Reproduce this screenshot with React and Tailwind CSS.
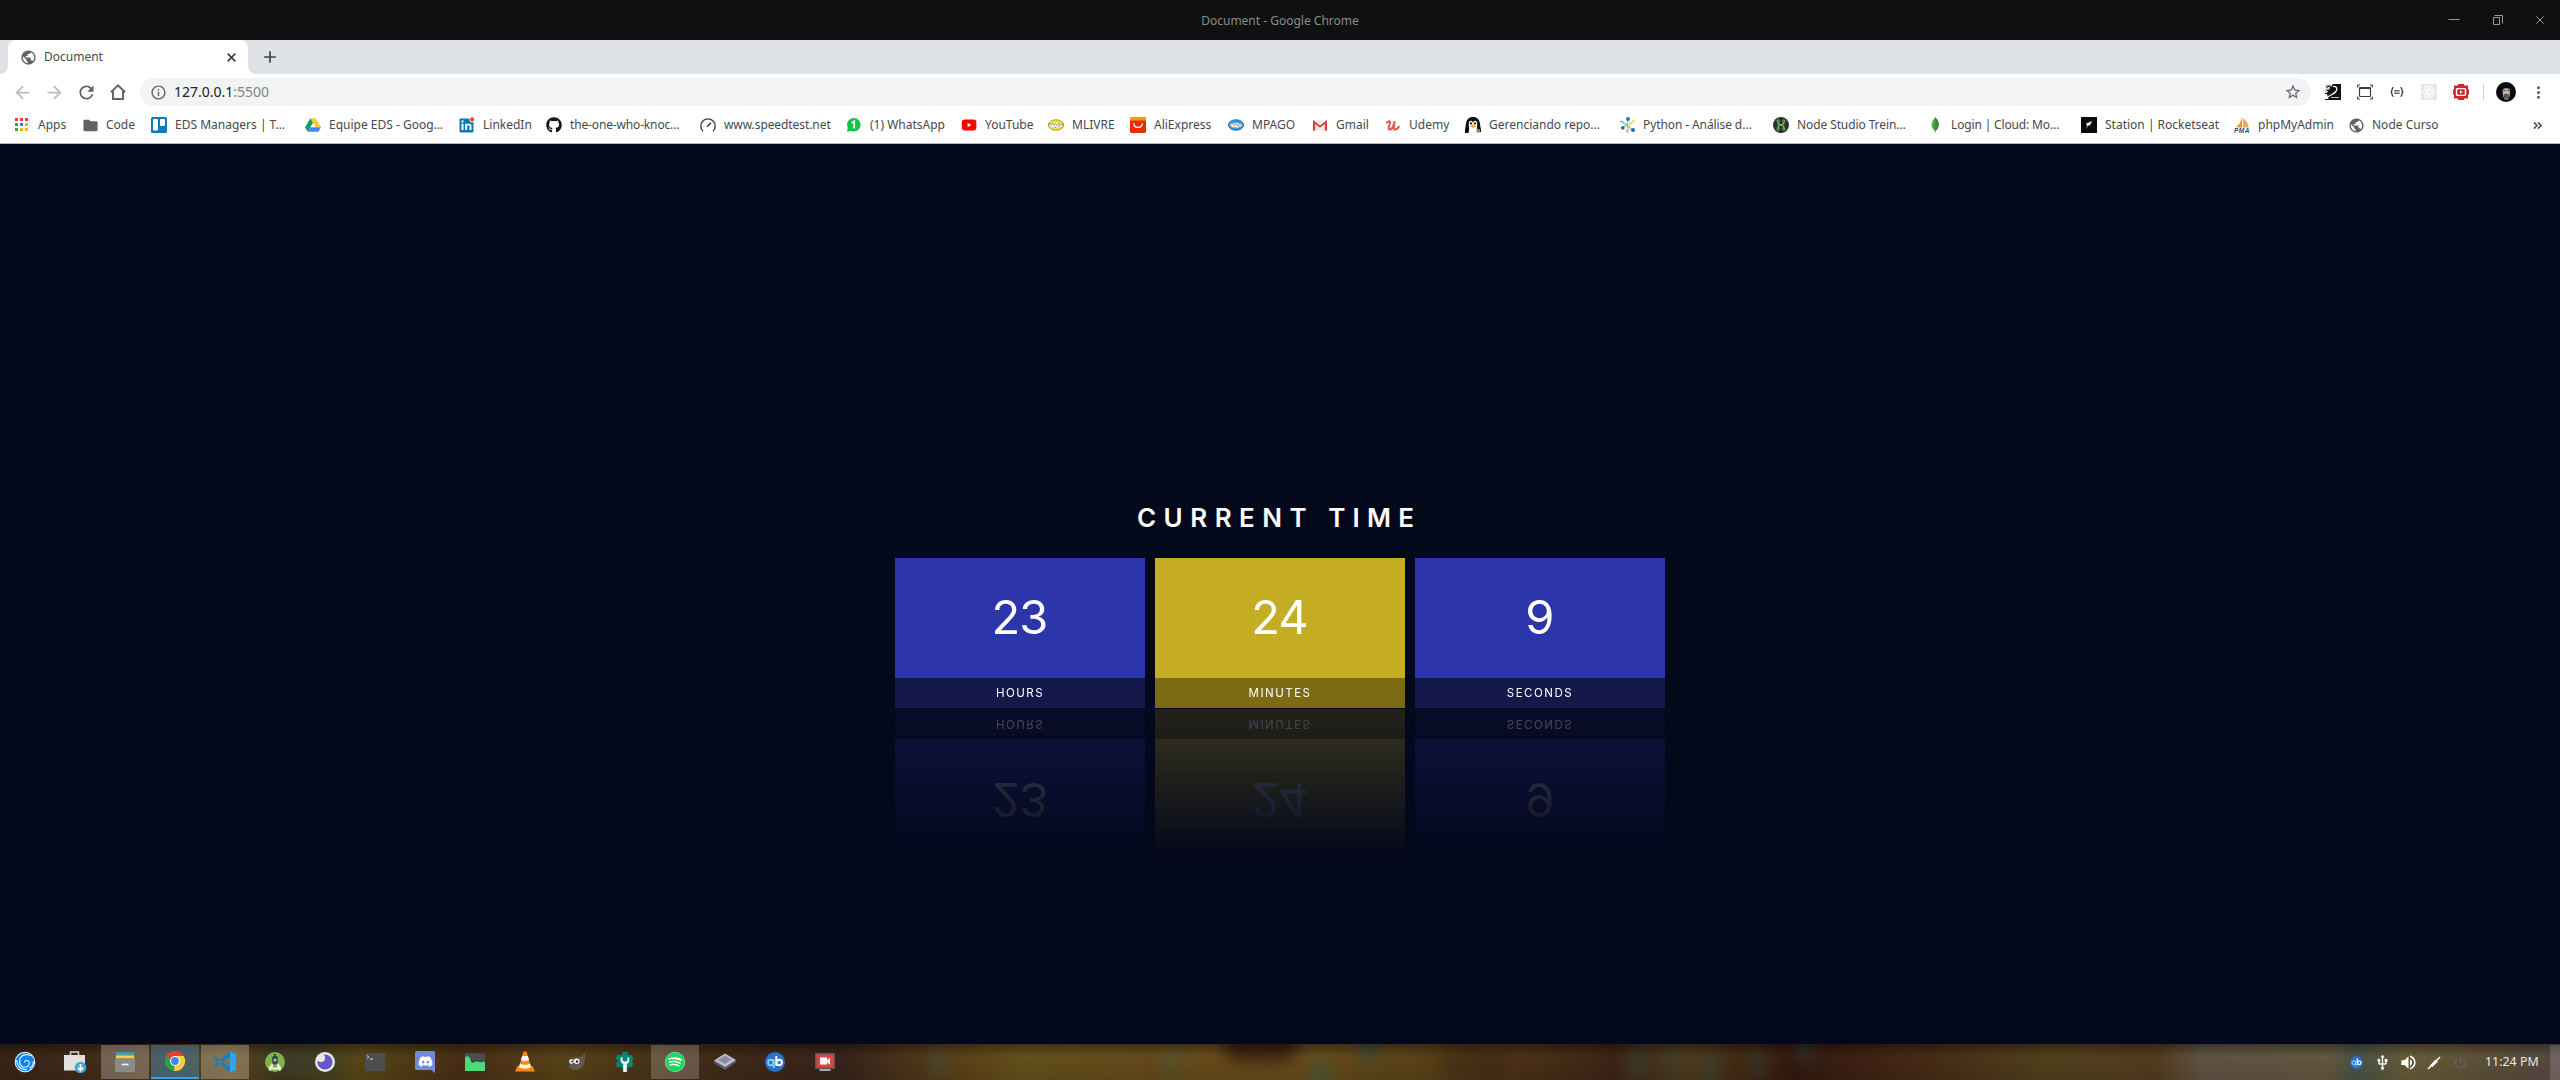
import React from "react";
import {
  MdAdd, MdArrowBack, MdArrowForward, MdFolder, MdInfoOutline, MdMoreVert,
  MdPowerSettingsNew, MdPublic, MdRefresh, MdStarBorder, MdUsb, MdVolumeUp,
} from "react-icons/md";
import { FaDiscord, FaGithub, FaSpotify } from "react-icons/fa";

const S = ({ n = 16, vb = "0 0 16 16", className = "", children }) => (
  <svg width={n} height={n} viewBox={vb} className={`block shrink-0 ${className}`} fill="none">
    {children}
  </svg>
);

/* ---------- bookmark icons ---------- */

const Apps = () => (
  <S>
    {[["#ea4335", "#ea4335", "#ea4335"], ["#34a853", "#1e88e5", "#fbb300"], ["#34a853", "#fbb300", "#fbb300"]].map((r, y) =>
      r.map((c, x) => <rect key={`${x}${y}`} x={1 + x * 5} y={1 + y * 5} width="3" height="3" fill={c} />)
    )}
  </S>
);
const Trello = () => (
  <S>
    <rect width="16" height="16" rx="1.5" fill="#0c7bc0" />
    <rect x="2" y="2" width="5" height="11.5" rx="1" fill="#fff" />
    <rect x="9" y="2" width="5" height="7" rx="1" fill="#fff" />
  </S>
);
const Drive = () => (
  <S>
    <path d="M5.4 1.3h5.2L16 10.3h-5.3z" fill="#fcc934" />
    <path d="M5.4 1.3 8 5.7 2.7 14.7 0 10.3z" fill="#11a15f" />
    <path d="M5.3 10.3H16l-2.7 4.4H2.7z" fill="#4285f4" />
  </S>
);
const LinkedIn = () => (
  <S>
    <rect x=".5" y="1.5" width="14" height="14" rx="1" fill="#0a78b5" />
    <path d="M2.5 6.700h2V13h-2zM2.500 3.500h2v2h-2zM6.100 6.700h2v.9c.9-1.5 4.400-1.500 4.400 1.600V13h-2V9.600c0-1.700-2.300-1.600-2.300 0V13H6.100z" fill="#fff" />
    <circle cx="13.2" cy="2.4" r="2.8" fill="#fff" />
    <circle cx="13.2" cy="2.4" r="2.1" fill="#f0433a" />
  </S>
);
const Speed = () => (
  <S>
    <path d="M3 14.3A7.2 7.2 0 1 1 13 14.3" stroke="#3c4043" strokeWidth="1.4" />
    <path d="M7 9.8 11 5.8" stroke="#3c4043" strokeWidth="1.6" />
  </S>
);
const Whats = () => (
  <S>
    <circle cx="7.8" cy="7.800" r="6.800" fill="#12c344" />
    <path d="M1 14.800 1.800 10.500l3.700 3.300z" fill="#12c344" />
    <path d="M5.800 6 8.200 4.400v7.200" stroke="#fff" strokeWidth="1.800" />
  </S>
);
const YT = () => (
  <S>
    <rect x=".8" y="2.600" width="14.600" height="10.800" rx="2.800" fill="#f00" />
    <path d="M6.600 5.800v4.400L10.400 8z" fill="#fff" />
  </S>
);
const Shake = ({ c, d }) => (
  <S>
    <ellipse cx="8" cy="8" rx="7.600" ry="5.300" fill={c} stroke={d} strokeWidth=".8" />
    <path d="M1.500 7.300C3.500 6.300 5 5.500 6.500 5.900 9 5.200 12 6.300 14.500 7.300c-.5 2.200-3 3.200-6 3.700C5 10.800 2.500 9.800 1.500 7.300z" fill="#f4f4f0" />
    <path d="M.8 6.800c2.200.8 3.700-.3 5.200 0M5.500 8.300 7.500 7l4 2.700M6.500 10l2 .8M15.200 6.800c-1.800 1-3.700.6-5.200-.1" stroke="#77817f" strokeWidth=".9" />
  </S>
);
const Ali = () => (
  <S>
    <rect width="16" height="16" rx="1.800" fill="#e62e04" />
    <path d="M0 1.800A1.800 1.800 0 0 1 1.800 0h12.400A1.800 1.800 0 0 1 16 1.800V3.500H0z" fill="#ff9b00" />
    <path d="M3.700 6.200c.4 5.600 8.200 5.600 8.600 0" stroke="#fff" strokeWidth="1.400" />
  </S>
);
const Gmail = () => (
  <S>
    <path d="M1.500 3h13v10.500h-13z" fill="#ececec" />
    <path d="M1 13.700V3l7 5.400L15 3v10.700h-2.200V7L8 10.700 3.200 7v6.700z" fill="#d9453a" />
  </S>
);
const Udemy = () => (
  <S>
    <path d="M2 5.500C4 3.500 5.700 4 4.800 6.800 3.600 10.300 3 12.800 5 12.600c2-.2 4-4.500 4.700-8.300-.9 4-1.500 8.300.2 8.300 1.200 0 2.700-1 3.900-2.700" stroke="#ec5252" strokeWidth="2" strokeLinecap="round" />
  </S>
);
const Penguin = () => (
  <S>
    <path d="M0 16C-.5 13 .8 10 1 7 1.300 2.500 4 0 8 0s6.500 2.500 7 7c.2 3 1.200 5 1 8h-3l-1.500-4h-7L3.500 16z" fill="#0b0b0b" />
    <path d="M4.800 14C3.500 9 3 4 5.700 3.700 7 3.500 8 5 8 6c0-1 1-2.500 2.300-2.300C13 4 12.500 9 11.300 14z" fill="#fff" />
    <circle cx="6" cy="6.400" r="1.100" fill="#111" /><circle cx="10" cy="6.400" r="1.100" fill="#111" />
    <path d="M4.700 9 8 7.500 11.300 9 8 11z" fill="#f5b400" />
    <circle cx="13.200" cy="13.800" r="2" fill="#74a35c" />
  </S>
);
const Python = () => (
  <S>
    <path d="M9 2 8 8l6-3M1 4l7 4-6 3M8 8l1 6M8 8l5 5" stroke="#87b9cf" strokeWidth="1.200" />
    <circle cx="9" cy="2" r="1.900" fill="#1c6fb8" /><circle cx="3.800" cy="10.800" r="1.900" fill="#1c6fb8" />
    <circle cx="14" cy="13" r="2" fill="#1c6fb8" /><circle cx="14.500" cy="3.800" r="1.300" fill="#f6ea37" />
    <circle cx="10.500" cy="7.500" r="1.800" fill="#f6ea37" /><circle cx="8.500" cy="14" r="1.800" fill="#f7b593" />
    <path d="M0 4.300 4 3.700 5 6z" fill="#8ccb65" />
  </S>
);
const NodeStudio = () => (
  <S>
    <circle cx="8" cy="8" r="8" fill="#28323c" />
    <path d="M5.300 4.500v2.300L8 8l2.700-1.200V4.500M5.300 11.500V9.200L8 8l2.700 1.200v2.300" stroke="#7cc04b" strokeWidth="1.400" />
    <g stroke="#7cc04b" strokeWidth="1" fill="#28323c">
      <circle cx="5.200" cy="4" r="1.200" /><circle cx="10.800" cy="4" r="1.200" />
      <circle cx="5.200" cy="12" r="1.200" /><circle cx="10.800" cy="12" r="1.200" />
    </g>
  </S>
);
const Mongo = () => (
  <S>
    <path d="M8.200.300C11 3 12 5.500 11.700 8.500c-.2 2.500-1.500 4-3 5.200l-.2 2h-.6l-.2-2C6 12.300 4.700 10.500 4.600 8 4.500 5 6.500 2.500 8.200.300z" fill="#4faa41" />
    <path d="M8.200.300C11 3 12 5.500 11.700 8.500c-.2 2.500-1.500 4-3 5.200l-.500.300z" fill="#3a8a3a" />
  </S>
);
const Rocket = () => (
  <S>
    <rect width="16" height="16" fill="#0a0a0c" />
    <path d="M5 6.500 11.500 4 10 6.200l-1 2.300H7L5.500 12l.5-3.500z" fill="#f2f2f2" />
  </S>
);
const PMA = () => (
  <S>
    <path d="M8 0v10.500H2.800C4.500 8 7 5 8 0z" fill="#f0921e" />
    <path d="M9 1c3 2.500 5.500 5.500 5.800 9.500H9z" fill="#f8a94a" />
    <path d="M5 3.500c-.5 2.500-2 5-4 7h1.300C4 8.500 5 6 5 3.500z" fill="#d9d2c8" />
    <text x="0" y="16" fontSize="6.500" fontWeight="700" fontStyle="italic" fontFamily="Liberation Sans" fill="#3a3f78" textLength="15.500">PMA</text>
  </S>
);

const Grey = ({ children }) => <span className="text-[17px] text-[#5f6368]">{children}</span>;

const bookmarks = [
  [<Apps />, "Apps", "w-[68px]"],
  [<Grey><MdFolder /></Grey>, "Code", "w-[69px]"],
  [<Trello />, "EDS Managers | T…", "w-[154px]"],
  [<Drive />, "Equipe EDS - Goog…", "w-[154px]"],
  [<LinkedIn />, "LinkedIn", "w-[87px]"],
  [<FaGithub size={16} color="#181616" />, "the-one-who-knoc…", "w-[154px] tracking-[-0.15px]"],
  [<Speed />, "www.speedtest.net", "w-[146px] tracking-[-0.080px]"],
  [<Whats />, "(1) WhatsApp", "w-[115px]"],
  [<YT />, "YouTube", "w-[87px]"],
  [<Shake c="#f3e32c" d="#8a8746" />, "MLIVRE", "w-[82px]"],
  [<Ali />, "AliExpress", "w-[98px]"],
  [<Shake c="#2d9be0" d="#23618f" />, "MPAGO", "w-[84px]"],
  [<Gmail />, "Gmail", "w-[73px]"],
  [<Udemy />, "Udemy", "w-[80px]"],
  [<Penguin />, "Gerenciando repo…", "w-[154px]"],
  [<Python />, "Python - Análise d…", "w-[154px] tracking-[-0.1px]"],
  [<NodeStudio />, "Node Studio Trein…", "w-[154px] tracking-[-0.1px]"],
  [<Mongo />, "Login | Cloud: Mo…", "w-[154px] tracking-[-0.15px]"],
  [<Rocket />, "Station | Rocketseat", "w-[153px]"],
  [<PMA />, "phpMyAdmin", "w-[114px]"],
  [<Grey><MdPublic /></Grey>, "Node Curso", "w-[100px]"],
];

/* ---------- toolbar extension icons ---------- */

const ExtBird = () => (
  <S>
    <rect width="16" height="16" fill="#111" />
    <path d="M0 0h8L2 9H0z" fill="#ddd" />
    <path d="M1.500 3.500c2-2 4-1.500 4 .5S3 7 1.500 6" stroke="#222" strokeWidth="1.300" />
    <path d="M8 2.500c4-.5 5 2.500 2.500 5.500S5 10.500 3 13" stroke="#fff" strokeWidth="1.300" />
    <path d="M0 10h2l1.500 5H0zM6 13h8v.8H6z" fill="#fff" />
  </S>
);
const ExtFrame = () => (
  <S>
    <path d="M0 4V.500h3.500zM16 4V.500h-3.500zM0 12v3.500h3.500zM16 12v3.500h-3.500z" fill="#2f8a2c" />
    <rect x="2.500" y="3.500" width="11" height="9" rx=".8" stroke="#3b3b3b" strokeWidth="1.200" />
    <path d="M2.500 4h11" stroke="#3b3b3b" strokeWidth="2" />
  </S>
);
const ExtBraces = () => (
  <S>
    <path d="M4.500 3.500C2 3.500 4 7.500 1.800 8 4 8.500 2 12.500 4.500 12.500M11.500 3.500c2.500 0 .5 4 2.700 4.500-2.200.5-.2 4.500-2.700 4.500" stroke="#333" strokeWidth="1.300" />
    <path d="M5.500 6.800h5M5.500 9.200h5" stroke="#333" strokeWidth="1.500" strokeDasharray="1.400 .5" />
  </S>
);
const ExtReact = () => (
  <S>
    <rect width="16" height="16" fill="#e6e6e6" />
    <g stroke="#fff" strokeWidth="1">
      <ellipse cx="8" cy="8" rx="6.500" ry="2.600" />
      <ellipse cx="8" cy="8" rx="6.500" ry="2.600" transform="rotate(60 8 8)" />
      <ellipse cx="8" cy="8" rx="6.500" ry="2.600" transform="rotate(120 8 8)" />
    </g>
    <circle cx="8" cy="8" r="1.400" fill="#fff" />
  </S>
);
const ExtTube = () => (
  <S>
    <path d="M1 1.500h4V0h6v1.500h4v4h1v5h-1v4h-4V16H5v-1.500H1v-4H0v-5h1z" fill="#d4232b" />
    <rect x="2.800" y="4" width="10.400" height="8" rx="1.500" fill="#fff" />
    <rect x="4.200" y="5.300" width="7.600" height="5.400" rx="1" fill="#d4232b" />
    <path d="M7 6.300v3.400L9.700 8z" fill="#fff" />
  </S>
);
const Avatar = () => (
  <S n={20} vb="0 0 20 20">
    <circle cx="10" cy="10" r="10" fill="#070812" />
    <path d="M6.500 8c1-2.500 6.500-2.500 7.500 0l-.3 6-1.700 3.500H8.700L7 14z" fill="#c4b3a9" />
    <path d="M7 8.500h2.500M11 8.500h2.500M8 13c1.500-1 3-1 4.500 0l-.4 3H8.500z" stroke="#28201f" strokeWidth=".7" fill="#6d5c56" />
  </S>
);

const Chrome = () => (
  <>
    <header className="flex h-10 items-center bg-[#101010] text-[12px] text-[#8c8c8c]">
      <div className="w-[105px]" />
      <div className="flex-1 pl-[7px] pt-px text-center">Document - Google Chrome</div>
      <div className="flex w-[112px] items-center justify-between pr-4 text-[#9a9a9a]">
        <S n={12} vb="0 0 12 12"><path d="M.500 5.500h11" stroke="currentColor" /></S>
        <S n={10} vb="0 0 10 10"><path d="M.500 2.500h6v7h-6zM1.500.500h8v8" stroke="currentColor" /></S>
        <S n={8} vb="0 0 8 8"><path d="m.300.300 7.400 7.400M7.700.300.300 7.700" stroke="currentColor" /></S>
      </div>
    </header>
    <div className="flex h-[34px] bg-[#dee1e6]">
      <div className="w-2 bg-white"><div className="h-full rounded-br-lg bg-[#dee1e6]" /></div>
      <div className="flex w-60 items-center rounded-t-lg bg-white pr-3 pl-3 text-[12px] text-[#45494d]">
        <MdPublic size={17} color="#5f6368" />
        <span className="ml-[7px] flex-1">Document</span>
        <S n={9} vb="0 0 9 9"><path d="m.700.700 7.600 7.600M8.300.700.700 8.300" stroke="#3c4043" strokeWidth="1.700" /></S>
      </div>
      <div className="w-2 bg-white"><div className="h-full rounded-bl-lg bg-[#dee1e6]" /></div>
      <div className="flex items-center pl-1"><MdAdd size={20} color="#3c4043" /></div>
    </div>
    <div className="flex h-9 items-center bg-white px-1.5 text-[#5f6368]">
      <div className="flex w-8 justify-center text-[#babcbe]"><MdArrowBack size={21} /></div>
      <div className="flex w-8 justify-center text-[#babcbe]"><MdArrowForward size={21} /></div>
      <div className="flex w-8 justify-center"><MdRefresh size={21} /></div>
      <div className="flex w-8 justify-center">
        <S><path d="M.9 8.300 8 1.400l7.100 6.900M3 7v8h10V7" stroke="currentColor" strokeWidth="1.900" /></S>
      </div>
      <div className="ml-1.5 flex h-7 flex-1 items-center rounded-full bg-[#f1f3f4] pr-[9px] pl-2.5 text-[14px]">
        <MdInfoOutline size={17} />
        <span className="ml-[7px] -mt-px text-[#202124]">127.0.0.1<span className="text-[#80868b]">:5500</span></span>
        <span className="flex-1" />
        <MdStarBorder size={18} />
      </div>
      <div className="ml-1.5 flex">
        {[ExtBird, ExtFrame, ExtBraces, ExtReact, ExtTube].map((E, i) => (
          <div key={i} className="flex w-8 justify-center"><E /></div>
        ))}
      </div>
      <div className="mr-1.5 ml-1.5 h-4 w-px bg-[#c9cbce]" />
      <div className="flex w-8 justify-center"><Avatar /></div>
      <div className="flex w-8 justify-center"><MdMoreVert size={19} /></div>
    </div>
    <nav className="flex h-[34px] items-center border-b border-[#b4b5b8] bg-white pr-[18px] pb-[3px] pl-3.5 text-[12px] text-[#45494d]">
      {bookmarks.map(([icon, label, w]) => (
        <div key={label} className={`flex shrink-0 items-center ${w}`}>
          <span className="flex w-6 shrink-0">{icon}</span>
          <span className="whitespace-nowrap">{label}</span>
        </div>
      ))}
      <span className="ml-auto">
        <S n={9} vb="0 0 10 10"><path d="m1 1.500 3.500 3.500L1 8.500M5.500 1.500 9 5 5.500 8.500" stroke="#4b4f54" strokeWidth="1.700" /></S>
      </span>
    </nav>
  </>
);

/* ---------- clock ---------- */

const Cell = ({ value, label, face, base }) => (
  <div className="w-[250px] text-white">
    <div className={`flex h-[120px] items-center justify-center pr-px pb-[3px] text-[47px] leading-none tracking-[-0.8px] ${face}`}>{value}</div>
    <div className={`flex h-[30px] items-center justify-center pt-[2px] text-[11.5px] tracking-[1.5px] ${base}`}>{label}</div>
  </div>
);

const Clock = () => (
  <main className="flex h-[900px] flex-col items-center bg-[#04081b] pt-[359px] font-['Inter']">
    <h2 className="mb-[25px] pr-[2px] text-[26px] leading-[30px] font-semibold whitespace-nowrap text-white">
      <span className="tracking-[7.500px]">CURRENT</span>
      <span className="ml-[14px] tracking-[7.200px]">TIME</span>
    </h2>
    <div className="flex gap-2.5 [-webkit-box-reflect:below_1px_linear-gradient(transparent,#0004)]">
      <Cell value="23" label="HOURS" face="bg-[#2d35aa]" base="bg-[#14184b]" />
      <Cell value="24" label="MINUTES" face="bg-[#c4ad23]" base="bg-[#7a6b14]" />
      <Cell value="9" label="SECONDS" face="bg-[#2d35aa]" base="bg-[#14184b]" />
    </div>
  </main>
);

/* ---------- dock ---------- */

const D = ({ children }) => <S n={20} vb="0 0 20 20" className="overflow-visible">{children}</S>;
const QB = ({ n = 20 }) => (
  <S n={n} vb="0 0 20 20">
    <circle cx="10" cy="10" r="10" fill="#2d6fc4" />
    <circle cx="5.800" cy="10.500" r="2.700" stroke="#6fd0fb" strokeWidth="1.900" /><path d="M8.700 7v9" stroke="#6fd0fb" strokeWidth="1.900" />
    <circle cx="14.200" cy="10.500" r="2.700" stroke="#fff" strokeWidth="1.900" /><path d="M11.300 4v10" stroke="#fff" strokeWidth="1.900" />
  </S>
);

const dock = [
  <D><circle cx="10" cy="10" r="10.300" fill="#eaf6ff" /><circle cx="10" cy="10" r="9.300" fill="#0a84ee" /><path d="M17 4C10 .5 4.500 4 4.500 9.500c0 4.500 4.500 7 8 5 2.500-1.500 2.500-5 0-6-1.500-.5-3 .3-3 2M1.500 8C2 14 6 18 12 17.500M18.500 9c0 3.500-1.500 6-4 7.500" stroke="#e3f3ff" strokeWidth="1.200" /></D>,
  <D><path d="M5.500 3.500V0h8v3.500" stroke="#d9d5d2" strokeWidth="1.500" /><path d="M-1 3h21v15.500H-1z" fill="#e3e1df" /><circle cx="15.500" cy="15.500" r="5.800" fill="#3fa9dc" /><path d="M15.500 12v6M13 15.800l2.500 2.700 2.500-2.700" stroke="#fff" strokeWidth="1.800" /></D>,
  <D><path d="M1 0h18v2.500H1z" fill="#3e8ce0" /><path d="M1 2.500h18V4H1z" fill="#5fd368" /><path d="M1 4h18v2.500H1z" fill="#f6d04d" /><path d="M0 6.500h20V20H0z" fill="#8a8a8a" /><path d="M6.500 12.500h7" stroke="#f3f3f3" strokeWidth="1.700" /></D>,
  <D><path d="M10 10 1.300 5A10 10 0 0 1 18.700 5z" fill="#e34133" /><path d="M10 10 1.300 5A10 10 0 0 0 10 20l4.300-7.500z" fill="#2aa24c" /><path d="M10 10 9 20a10 10 0 0 0 9.700-15H10z" fill="#fccd3c" /><path d="M1.300 5 5.700 12.500 10 10V5z" fill="#2aa24c" /><path d="M1.300 5A10 10 0 0 1 18.700 5H10L5.500 8z" fill="#e34133" /><circle cx="10" cy="10" r="5" fill="#fff" /><circle cx="10" cy="10" r="3.900" fill="#4285f4" /></D>,
  <D><path d="m15-.5 6 2.500v16l-6 2.500z" fill="#2aa6ee" /><path d="m15 4.500-14 10.500-2-1.500L15-.5zM15 15.500-.5 4.500l-1.500 1.500L15 20.500z" fill="#0f7fc9" /></D>,
  <D><circle cx="10" cy="10" r="10" fill="#7eb544" /><path d="M4.500 14.500c3 3 8 3 11 0M8.500 10 4.500 18.500M11.500 10l4 8.500" stroke="#f2f5ee" strokeWidth="2" /><rect x="7.200" y="4" width="5.600" height="8.500" rx="1.500" fill="#37474f" /><path d="M10 2v3" stroke="#37474f" strokeWidth="2" /><circle cx="10" cy="8" r="1.500" fill="#b9c7a5" /></D>,
  <D><circle cx="10" cy="10" r="10" fill="#e9e7ec" /><circle cx="10" cy="10" r="7.600" fill="#6656c8" /><circle cx="6" cy="6" r="4" fill="#e9e7ec" /></D>,
  <D><rect y="1" width="20" height="18" rx=".5" fill="#4d4f4f" /><path d="m2 3.500 1.800 1.500L2 6.500M5 7h3" stroke="#ddd" /></D>,
  <D><path d="M1.500-1h17A1.500 1.500 0 0 1 20 .5V21l-4-3H1.500A1.500 1.500 0 0 1 0 16.500V.5A1.500 1.500 0 0 1 1.500-1z" fill="#7289da" /><foreignObject x="2.500" y="1.500" width="15" height="15"><FaDiscord size={15} color="#fff" /></foreignObject></D>,
  <D><path d="M0 1h20v18H0z" fill="#45494a" /><path d="M0 4h20M0 7h20" stroke="#5c6061" strokeWidth=".8" /><path d="M0 19V6c1-2.500 4-2.500 5 .5s1 5 3.500 4 3-1.500 5.500-.5 4-.5 6-.5V19z" fill="#4bdc78" /></D>,
  <D><path d="M2.500 14h15l2.500 5.500H0z" fill="#ff8a0a" /><path d="M8.500-.5h3L16 15c-2 2.500-10 2.500-12 0z" fill="#ff8a0a" /><path d="M7.200 4h5.600l1.200 4c-2 1.500-6 1.500-8 0zM5 11.500c2 1.800 8 1.800 10 0l1 3.500c-2 2-10 2-12 0z" fill="#f7f4f1" /></D>,
  <D><path d="M20 1c.5 9-1 16-9 17-4 .3-7-2-8-5-1-3 0-5 2-6 2-1.500 4-1.500 6-1.500 4-.3 7-1.500 9-4.500z" fill="#655a4c" /><circle cx="6.500" cy="9.500" r="2.300" fill="#fff" /><circle cx="11.800" cy="9.300" r="2.700" fill="#fff" /><circle cx="7" cy="9.500" r="1" fill="#222" /><circle cx="12" cy="9.500" r="1.200" fill="#222" /><path d="m0 10 3.500-1 1.500 3.500-3 2.500z" fill="#3c4248" /></D>,
  <D><circle cx="10" cy="9" r="7.500" fill="#088573" /><path d="M7.500 0h5v18h-5zM.3 6.500l2.500-4.300 16 9-2.500 4.300zM.3 11.500l2.500 4.300 16-9-2.500-4.300z" fill="#088573" /><path d="M6.500 5c-2 2.500-.5 6 1.700 7V20h3.600v-8c2.200-1 3.700-4.500 1.700-7l-1 .3v3.200l-1.500 1h-2l-1.500-1V5.300z" fill="#f4f4f4" /></D>,
  <span className="flex rounded-full bg-white"><FaSpotify size={20} color="#1ed760" /></span>,
  <D><path d="m-1 8.500 11-7 11 6.500-11 9z" fill="#c0bcd0" /><path d="m-1 8.500 11 6.500 11-7v2.500L10 18-1 11z" fill="#5c586c" /><path d="m3 8 7-4.500 6.500 4L10 12z" fill="#8f8aa6" /></D>,
  <QB />,
  <D><path d="M0 1h20v16H0z" fill="#56585b" /><path d="M1.500 2.500h17v13h-17z" fill="#db4740" /><path d="M4.500 17h11v2h-11z" fill="#a9a9a9" /><path d="M5 5.500h7V8l3-2v6.500l-3-2v2H5z" fill="#fff" /></D>,
];
const slotTint = { 2: "bg-white/25", 3: "bg-[#4a86b0]/50 border-b-2 border-[#2ea5fb]", 4: "bg-white/25", 13: "bg-white/20" };

const blotches = [
  "w-[90px] ml-[255px] bg-[#2f4a35]/50",
  "w-[14px] ml-[587px] bg-[#2f5f50]/50",
  "w-[14px] ml-[219px] bg-[#3f6048]/50",
  "w-[76px] ml-[44px] -mt-[18px] bg-[#331410]/80",
  "w-[14px] ml-[15px] mt-[16px] bg-[#3a6147]/80",
  "w-[16px] ml-[33px] -mt-[18px] bg-[#2c4a48]/80",
  "w-[70px] ml-[64px] bg-[#38200f]/40",
  "w-[14px] ml-[119px] bg-[#2d4f42]/60",
  "w-[14px] ml-[20px] bg-[#2d4f42]/50",
  "w-[14px] ml-[25px] mt-[10px] bg-[#2d4f42]/60",
  "w-[12px] ml-[36px] bg-[#2d4f42]/50",
  "w-[14px] ml-[34px] -mt-[18px] bg-[#2b4a4c]/60",
];

const Dock = () => (
  <footer className="relative h-9 overflow-hidden bg-[linear-gradient(90deg,#382417_0%,#3e2918_3%,#5c481b_9%,#4a2f18_11%,#574716_14%,#472d15_18%,#584217_22%,#453018_26%,#3d2818_29%,#35241a_33%,#5b3d17_37%,#63501b_40%,#65491a_45%,#684e1a_50%,#5b4319_55%,#4d3317_59%,#3c2415_63%,#51391a_66%,#34190f_70%,#452a16_75%,#51401c_80%,#533b1d_84.200%,#5e5243_86%,#62573f_91%,#465244_92%,#665b38_94%,#5d5037_97%,#574744_100%)]">
    <div className="absolute inset-0 flex blur-sm">
      {blotches.map((b) => <div key={b} className={`h-9 shrink-0 rounded-full ${b}`} />)}
    </div>
    <div className="absolute inset-0 bg-linear-to-b from-black/35 via-transparent via-35% to-black/10" />
    <div className="relative flex h-full items-stretch pt-px">
      <div className="flex gap-0.5 pb-px pl-px">
        {dock.map((icon, i) => (
          <div key={i} className={`flex w-12 items-center justify-center ${slotTint[i] || ""}`}>{icon}</div>
        ))}
      </div>
      <div className="ml-auto flex items-center text-white">
        <div className="flex w-[26px] justify-center"><QB n={13} /></div>
        <div className="flex w-[26px] justify-center"><MdUsb size={17} /></div>
        <div className="flex w-[26px] justify-center"><MdVolumeUp size={19} /></div>
        <div className="flex w-[26px] justify-center">
          <S n={14} vb="0 0 14 14"><path d="m1 13 4-4M9 5l4-4" stroke="#fff" strokeWidth="1.500" /><path d="m3 9.500 5.500-6 2.500 2-5.500 5.500z" fill="#fff" /></S>
        </div>
        <div className="flex w-[26px] justify-center text-[#5c6470]"><MdPowerSettingsNew size={15} /></div>
        <span className="ml-3 w-[65px] text-[12.400px] whitespace-nowrap text-[#e9e6e2]">11:24 PM</span>
        <div className="h-full w-2.5 bg-white/15" />
      </div>
    </div>
  </footer>
);

export default function App() {
  return (
    <div className="flex h-[1080px] w-[2560px] flex-col overflow-hidden bg-[#04081b] font-['Noto_Sans',sans-serif]">
      <Chrome />
      <Clock />
      <Dock />
    </div>
  );
}
